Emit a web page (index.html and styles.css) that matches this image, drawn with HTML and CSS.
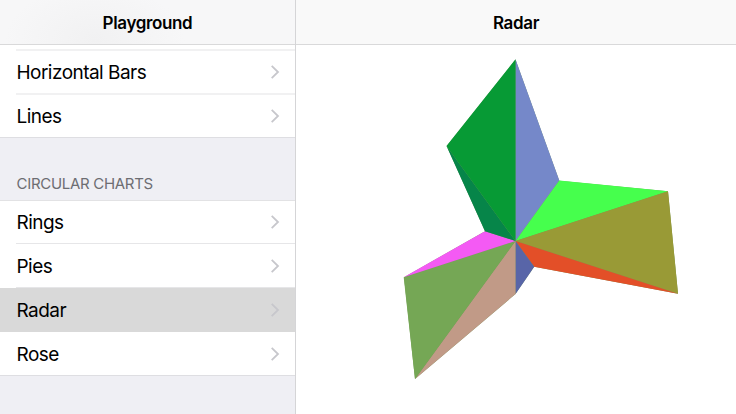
FILE: index.html
```html
<!DOCTYPE html>
<html lang="en"><head><meta charset="utf-8"><title>Playground</title><link rel="stylesheet" href="styles.css"></head>
<body>
<div class="split">
<aside class="master">
<header class="bar bar-master"><h1>Playground</h1></header>
<ul class="list first">
<li class="sliver"></li>
<li><span class="label">Horizontal Bars</span><svg class="chev" viewBox="0 0 10 16"><path d="M1.700 1.800L8 8L1.700 14.200"/></svg></li>
<li><span class="label">Lines</span><svg class="chev" viewBox="0 0 10 16"><path d="M1.700 1.800L8 8L1.700 14.200"/></svg></li>
</ul>
<h2>CIRCULAR CHARTS</h2>
<ul class="list second">
<li><span class="label">Rings</span><svg class="chev" viewBox="0 0 10 16"><path d="M1.700 1.800L8 8L1.700 14.200"/></svg></li>
<li><span class="label">Pies</span><svg class="chev" viewBox="0 0 10 16"><path d="M1.700 1.800L8 8L1.700 14.200"/></svg></li>
<li class="selected"><span class="label">Radar</span><svg class="chev" viewBox="0 0 10 16"><path d="M1.700 1.800L8 8L1.700 14.200"/></svg></li>
<li><span class="label">Rose</span><svg class="chev" viewBox="0 0 10 16"><path d="M1.700 1.800L8 8L1.700 14.200"/></svg></li>
</ul>
</aside>
<main class="detail">
<header class="bar"><h1>Radar</h1></header>
<svg class="chart" viewBox="296 45 440 369">
<path class="backing" d="M515.500 59.500L559.300 180.700L668 191.300L678 293.700L534.200 266.800L515.500 294L415 379L404 277.300L485 231.200L446.700 146Z"/>
<path fill="#7588c9" d="M515.500 241V59.300L559.300 180.500Z"/>
<path fill="#46ff4d" d="M515.500 241L559.300 180.500L668 191.300Z"/>
<path fill="#999a36" d="M515.500 241L668 191.300L678 293.700Z"/>
<path fill="#e34f28" d="M515.500 241L678 293.700L534.200 266.800Z"/>
<path fill="#5865a8" d="M515.500 241L534.200 266.800L515.500 294Z"/>
<path fill="#c19a87" d="M515.500 241V294L415 379Z"/>
<path fill="#75a755" d="M515.500 241L415 379L403.700 277.200Z"/>
<path fill="#f45af4" d="M515.500 241L403.700 277.200L485 231.200Z"/>
<path fill="#068549" d="M515.500 241L485 231.200L446.500 146Z"/>
<path fill="#079a35" d="M515.500 241L446.500 146L515.500 59.300Z"/>
</svg>
</main>
</div>
</body></html>
```
FILE: styles.css
```css
*{box-sizing:border-box}
body{margin:0;font-family:Inter,"Liberation Sans",sans-serif;color:#000}
.split{display:flex;width:736px;height:414px;overflow:hidden;background:#fff}
.master{width:296px;border-right:1px solid #d5d5d7;background:#efeff4;flex:none}
.detail{flex:1}
.bar{height:45px;border-bottom:1px solid #d9d9da;background:#f9f9f9;display:flex;align-items:center;justify-content:center}
.bar-master{background:radial-gradient(ellipse 90px 55px at 95px 40px,#f1f1f2,rgba(241,241,242,0)),#f7f7f8}
h1{margin:0;padding-top:1px;font-size:17px;line-height:22px;font-weight:600;letter-spacing:-.36px}
.list{list-style:none;margin:0;padding:0;background:#fff}
.list li{height:44px;padding:0 15px 0 16.500px;display:flex;align-items:center;justify-content:space-between;position:relative}
.list li::after{content:"";position:absolute;left:16px;right:0;bottom:0;height:1px;background:#e6e6e8}
.first li::after{height:2px;bottom:-1px;background:#f1f1f2}
.list li:last-child::after{left:0;bottom:0;height:1px;background:#dedee2}
.list .sliver{height:5px}
.second{box-shadow:inset 0 1px #e2e2e4}
.label{padding-top:2px;font-size:19px;line-height:24px;letter-spacing:-.53px}
.chev{width:10px;height:16px;fill:none;stroke:#c7c7cc;stroke-width:1.8}
.list .selected{background:#d9d9d9}
.list .selected::after{background:#d9d9d9}
h2{margin:0;height:62px;padding:36px 16.500px 0;font-size:15px;line-height:19px;font-weight:400;letter-spacing:-.3px;color:#6d6d72}
.chart{display:block;width:440px;height:369px}
.backing{fill:#75965a}
```
